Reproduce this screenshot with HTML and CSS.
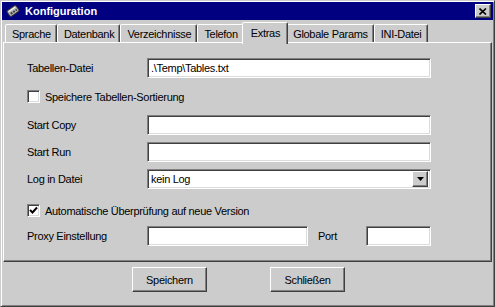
FILE: index.html
```html
<!DOCTYPE html>
<html lang="de">
<head>
    <meta charset="UTF-8">
    <meta name="viewport" content="width=device-width, initial-scale=1.0">
    <title>Konfiguration</title>
    <link rel="stylesheet" href="styles.css">
</head>
<body>
    <div class="window">
        <div class="titlebar">
            <svg class="app-icon" width="14" height="14" viewBox="0 0 14 14">
                <g transform="rotate(-35 7 7)">
                    <rect x="1.5" y="3.5" width="11" height="7" rx="1.5" fill="#b8b8b8" stroke="#303030"/>
                    <line x1="3" y1="5" x2="11" y2="5" stroke="#ffffff"/>
                    <rect x="3.5" y="7" width="2" height="2" fill="#404040"/>
                    <rect x="6.5" y="7" width="2" height="2" fill="#404040"/>
                    <rect x="9.5" y="7" width="1.5" height="2" fill="#404040"/>
                </g>
            </svg>
            <span class="title">Konfiguration</span>
            <div class="close">
                <svg width="8" height="7" viewBox="0 0 8 7">
                    <path d="M0.5 0.5 L7 6.5 M7 0.5 L0.5 6.5" stroke="#000" stroke-width="1.6"/>
                </svg>
            </div>
        </div>

        <div class="tabs">
            <div class="tab">Sprache</div>
            <div class="tab">Datenbank</div>
            <div class="tab">Verzeichnisse</div>
            <div class="tab">Telefon</div>
            <div class="tab active">Extras</div>
            <div class="tab">Globale Params</div>
            <div class="tab">INI-Datei</div>
        </div>

        <div class="panel">
            <div class="row">
                <label class="lbl">Tabellen-Datei</label>
                <input class="field wide" type="text" value=".\Temp\Tables.txt">
            </div>
            <div class="check">
                <span class="box"></span>
                <span>Speichere Tabellen-Sortierung</span>
            </div>
            <div class="row">
                <label class="lbl">Start Copy</label>
                <input class="field wide" type="text">
            </div>
            <div class="row gap">
                <label class="lbl">Start Run</label>
                <input class="field wide" type="text">
            </div>
            <div class="row gap">
                <label class="lbl">Log in Datei</label>
                <div class="field wide select">
                    <span>kein Log</span>
                    <span class="drop">
                        <svg width="7" height="4" viewBox="0 0 7 4"><path d="M0 0 H7 L3.5 4 Z" fill="#000"/></svg>
                    </span>
                </div>
            </div>
            <div class="check late">
                <span class="box">
                    <svg width="9" height="9" viewBox="0 0 9 9"><path d="M1 4 L3.5 6.5 L8 1.5" fill="none" stroke="#000" stroke-width="2"/></svg>
                </span>
                <span>Automatische Überprüfung auf neue Version</span>
            </div>
            <div class="row">
                <label class="lbl">Proxy Einstellung</label>
                <input class="field proxy" type="text">
                <label class="port-lbl">Port</label>
                <input class="field port" type="text">
            </div>
        </div>

        <div class="buttons">
            <button class="btn">Speichern</button>
            <button class="btn">Schließen</button>
        </div>
    </div>
</body>
</html>
```

FILE: styles.css
```css
* {
    box-sizing: border-box;
}
body {
    margin: 0;
    font-family: "Liberation Sans", Arial, sans-serif;
    font-size: 11px;
    letter-spacing: -0.3px;
    color: #000;
    background-color: #cccccc;
}
.window {
    width: 495px;
    height: 307px;
    padding: 1px;
    background-color: #cccccc;
    border: 1px solid;
    border-color: #cccccc #404040 #404040 #cccccc;
    box-shadow: inset 1px 1px #fff, inset -1px -1px #808080;
    display: flex;
    flex-direction: column;
}

/* title bar */
.titlebar {
    height: 18px;
    padding: 0 2px;
    background-color: #000080;
    color: #fff;
    display: flex;
    align-items: center;
}
.app-icon {
    margin-left: 2px;
}
.title {
    margin-left: 5px;
    font-weight: bold;
    letter-spacing: 0;
}
.close {
    margin-left: auto;
    width: 16px;
    height: 14px;
    background-color: #cccccc;
    border: 1px solid;
    border-color: #fff #404040 #404040 #fff;
    box-shadow: inset -1px -1px #808080;
    display: flex;
    align-items: center;
    justify-content: center;
}

/* tabs */
.tabs {
    height: 22px;
    margin-left: 1px;
    padding-left: 2px;
    display: flex;
    align-items: flex-end;
}
.tab {
    height: 18px;
    padding: 0 5px 0 6px;
    background-color: #cccccc;
    border: 1px solid;
    border-bottom: 0;
    border-color: #fff #404040 transparent #fff;
    border-radius: 2px 2px 0 0;
    box-shadow: inset -1px 0 #808080;
    display: flex;
    align-items: center;
}
.tab.active {
    position: relative;
    z-index: 1;
    height: 22px;
    margin: 0 -2px -2px;
    padding: 0 7px 2px 8px;
}

/* panel */
.panel {
    width: 489px;
    height: 220px;
    margin-left: 1px;
    padding: 15px 0 0 23px;
    border: 1px solid;
    border-color: #fff #404040 #404040 #fff;
    box-shadow: inset -1px -1px #808080;
}
.row {
    height: 20px;
    display: flex;
    align-items: center;
}
.row.gap {
    margin-top: 7px;
}
.lbl {
    width: 120px;
}
.field {
    height: 20px;
    padding: 0 3px;
    font: inherit;
    letter-spacing: inherit;
    color: #000;
    background-color: #fff;
    border: 1px solid;
    border-color: #808080 #fff #fff #808080;
    box-shadow: inset 1px 1px #404040, inset -1px -1px #dcdcdc;
    outline: none;
}
.wide {
    width: 284px;
}
.proxy {
    width: 161px;
}
.port-lbl {
    width: 48px;
    margin-left: 10px;
}
.port {
    width: 65px;
}
.select {
    padding: 2px 2px 2px 3px;
    display: flex;
    align-items: center;
    justify-content: space-between;
}
.drop {
    width: 16px;
    height: 16px;
    background-color: #cccccc;
    border: 1px solid;
    border-color: #fff #404040 #404040 #fff;
    box-shadow: inset -1px -1px #808080;
    display: flex;
    align-items: center;
    justify-content: center;
}

/* checkboxes */
.check {
    height: 21px;
    margin: 8px 0;
    display: flex;
    align-items: center;
}
.check.late {
    margin: 11px 0 5px;
}
.box {
    width: 13px;
    height: 13px;
    margin-right: 5px;
    background-color: #fff;
    border: 1px solid;
    border-color: #808080 #fff #fff #808080;
    box-shadow: inset 1px 1px #404040, inset -1px -1px #dcdcdc;
    display: flex;
    align-items: center;
    justify-content: center;
}

/* bottom buttons */
.buttons {
    margin-top: 5px;
    padding-left: 130px;
    display: flex;
    gap: 63px;
}
.btn {
    width: 75px;
    height: 25px;
    padding: 0;
    font: inherit;
    letter-spacing: inherit;
    color: #000;
    background-color: #cccccc;
    border: 1px solid;
    border-color: #fff #404040 #404040 #fff;
    box-shadow: inset -1px -1px #808080;
}
```
